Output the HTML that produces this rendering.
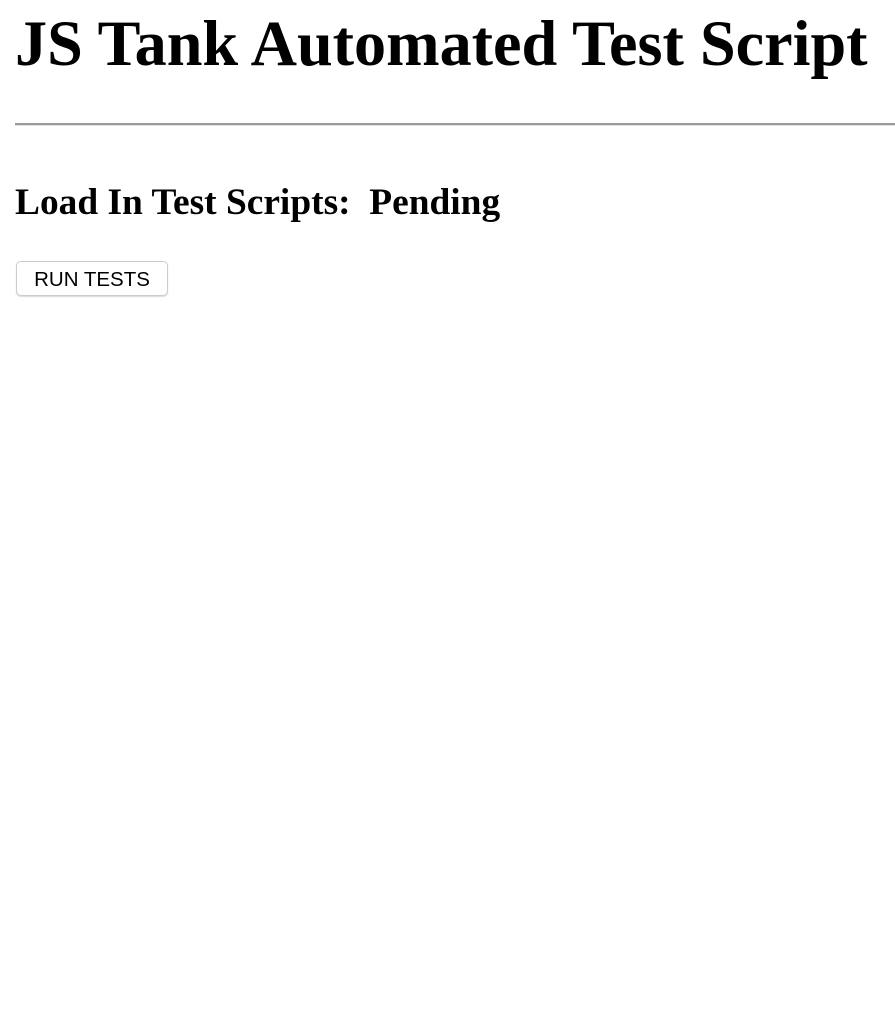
<!DOCTYPE html>
<html><head><style>
body{margin:0;padding:0 0 0 15px;font-family:"Liberation Serif",serif;background:#fff;width:880px;overflow:hidden}
h1{font-size:64.2px;font-weight:bold;margin:0;position:absolute;top:6px;left:15px;white-space:nowrap;line-height:76px}
.hr{position:absolute;top:123px;left:15px;width:900px;height:0;border-top:2px solid #999;border-bottom:1px solid #e0e0e0}
h2{position:absolute;top:181px;left:15px;margin:0;font-size:37.4px;line-height:44px;white-space:pre}
button{position:absolute;top:261px;left:16px;width:152px;height:35px;border:1px solid #ccc;border-radius:5px;background:#fff;font-family:"Liberation Sans",sans-serif;font-size:20.5px;color:#000;box-shadow:0 1px 1px rgba(0,0,0,.15);padding:2px 0 0}
</style></head><body>
<h1>JS Tank Automated Test Script</h1>
<div class="hr"></div>
<h2>Load In Test Scripts:  Pending</h2>
<button>RUN TESTS</button>
</body></html>
